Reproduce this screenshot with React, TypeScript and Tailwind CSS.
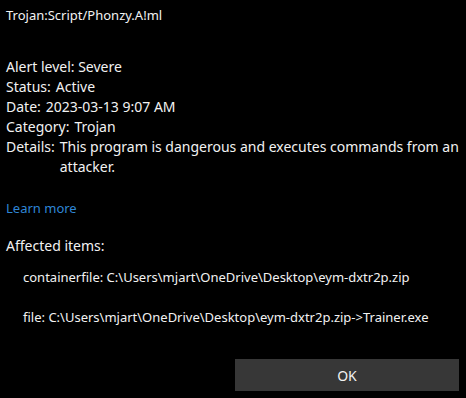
export default function App() {
  const rows = [
    { label: 'Status:', value: 'Active' },
    { label: 'Date:', value: '2023-03-13 9:07 AM' },
    { label: 'Category:', value: 'Trojan' },
  ];

  return (
    <div
      className="w-[466px] h-[398px] bg-black text-[#f2f2f2] overflow-hidden flex flex-col"
      style={{ fontFamily: '"Noto Sans", "Open Sans", sans-serif' }}
    >
      {/* Threat name */}
      <div className="px-[6px] pt-[5px] text-[13px] leading-[20px]">Trojan:Script/Phonzy.A!ml</div>

      {/* Summary */}
      <div className="px-[6px] mt-[32px] text-[14px] leading-[20px]">
        <div>Alert level: Severe</div>
        {rows.map((r) => (
          <div key={r.label} className="flex gap-[5px]">
            <span>{r.label}</span>
            <span>{r.value}</span>
          </div>
        ))}
        <div className="flex gap-[5px]">
          <span className="shrink-0">Details:</span>
          <span>This program is dangerous and executes commands from an attacker.</span>
        </div>
      </div>

      <div className="px-[6px] mt-[21px] text-[13px] leading-[20px] text-[#2f86d6]">Learn more</div>

      {/* Affected items */}
      <div className="px-[6px] mt-[18px] text-[14px] leading-[20px]">Affected items:</div>
      <div className="pl-[23px] mt-[11px] flex flex-col gap-[20px] text-[13px] leading-[20px]">
        <div>containerfile: C:\Users\mjart\OneDrive\Desktop\eym-dxtr2p.zip</div>
        <div>file: C:\Users\mjart\OneDrive\Desktop\eym-dxtr2p.zip-&gt;Trainer.exe</div>
      </div>

      {/* Footer */}
      <div className="mt-auto flex justify-end px-[7px] pb-[7px]">
        <button className="w-[224px] h-[32px] bg-[#373737] text-[14px] text-[#f2f2f2]">OK</button>
      </div>
    </div>
  );
}
